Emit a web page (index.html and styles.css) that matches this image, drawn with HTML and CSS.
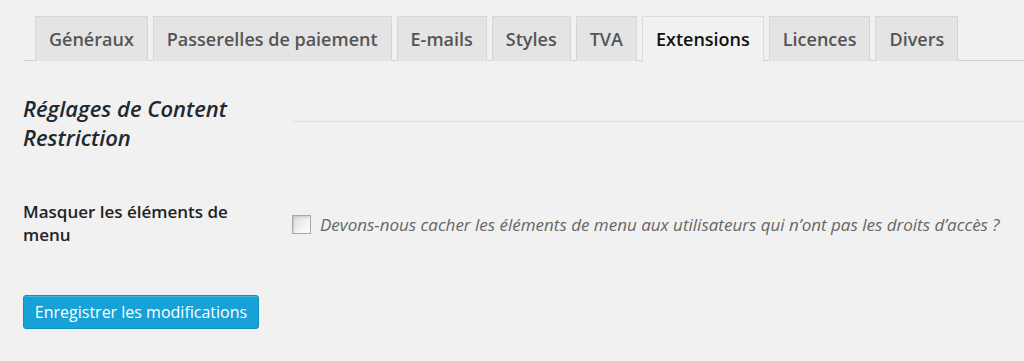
FILE: index.html
```html
<!DOCTYPE html>
<html lang="fr">
<head>
<meta charset="utf-8">
<link rel="stylesheet" href="styles.css">
</head>
<body>
<div class="wrap">
  <nav class="tabs">
    <a class="tab">Généraux</a>
    <a class="tab">Passerelles de paiement</a>
    <a class="tab">E-mails</a>
    <a class="tab">Styles</a>
    <a class="tab">TVA</a>
    <a class="tab active">Extensions</a>
    <a class="tab">Licences</a>
    <a class="tab">Divers</a>
  </nav>
  <div class="row heading-row">
    <h3 class="heading">Réglages de Content Restriction</h3>
    <div class="rule-cell"><hr class="rule"></div>
  </div>
  <div class="row field-row">
    <div class="label">Masquer les éléments de menu</div>
    <label class="field"><span class="checkbox"></span><span class="desc">Devons-nous cacher les éléments de menu aux utilisateurs qui n’ont pas les droits d’accès ?</span></label>
  </div>
  <div class="submit"><button class="button">Enregistrer les modifications</button></div>
</div>
</body>
</html>
```
FILE: styles.css
```css
html, body {
  margin: 0;
  padding: 0;
  background: #f1f1f1;
}
body {
  font-family: "Open Sans", "DejaVu Sans", sans-serif;
  color: #222;
  width: 1024px;
  height: 361px;
  overflow: hidden;
}
.wrap {
  padding: 16px 0 0 23px;
}
.tabs {
  display: flex;
  padding-left: 12px;
  border-bottom: 1px solid #d4d4d4;
  height: 44px;
}
.tab {
  display: block;
  box-sizing: border-box;
  height: 45px;
  margin-right: 5px;
  padding: 0 13px 0 13px;
  border: 1px solid #d6d6d6;
  border-bottom: none;
  background: #e4e4e4;
  color: #555;
  font-size: 18px;
  font-weight: 600;
  line-height: 44px;
  white-space: nowrap;
}
.tab.active {
  background: #f1f1f1;
  color: #111;
  border-color: #dcdcdc;
  height: 46px;
}
.row {
  display: grid;
  grid-template-columns: 269px 1fr;
}
.heading-row {
  margin-top: 33px;
}
.heading {
  margin: 0;
  font-size: 22px;
  font-style: italic;
  font-weight: 600;
  line-height: 28.5px;
  color: #23282d;
  width: 240px;
}
.rule-cell {
  padding-top: 27px;
}
.rule {
  margin: 0;
  border: none;
  border-top: 1px solid #e0e0e0;
  height: 0;
}
.field-row {
  margin-top: 49px;
}
.label {
  font-size: 17px;
  font-weight: 600;
  line-height: 23px;
  color: #222;
  width: 240px;
}
.field {
  display: flex;
  align-items: flex-start;
  padding-top: 15px;
}
.checkbox {
  flex: none;
  box-sizing: border-box;
  width: 19px;
  height: 19px;
  margin-right: 9px;
  border: 1px solid #a9a9a9;
  background: linear-gradient(135deg, #d8d8d8 0%, #f4f4f4 60%, #fbfbfb 100%);
  box-shadow: inset 1px 1px 2px rgba(0,0,0,0.12);
  margin-top: 0;
}
.desc {
  font-size: 17px;
  font-style: italic;
  color: #666;
  line-height: 20px;
  white-space: nowrap;
}
.submit {
  margin-top: 49px;
}
.button {
  display: block;
  box-sizing: border-box;
  height: 34px;
  width: 236px;
  padding: 0;
  border: 1px solid #0d8fc0;
  border-radius: 3px;
  background: #16a1d7;
  color: #fff;
  font-family: "Open Sans", "DejaVu Sans", sans-serif;
  font-size: 16px;
  line-height: 32px;
  box-shadow: inset 0 1px 0 rgba(120,200,230,0.5);
}
```
